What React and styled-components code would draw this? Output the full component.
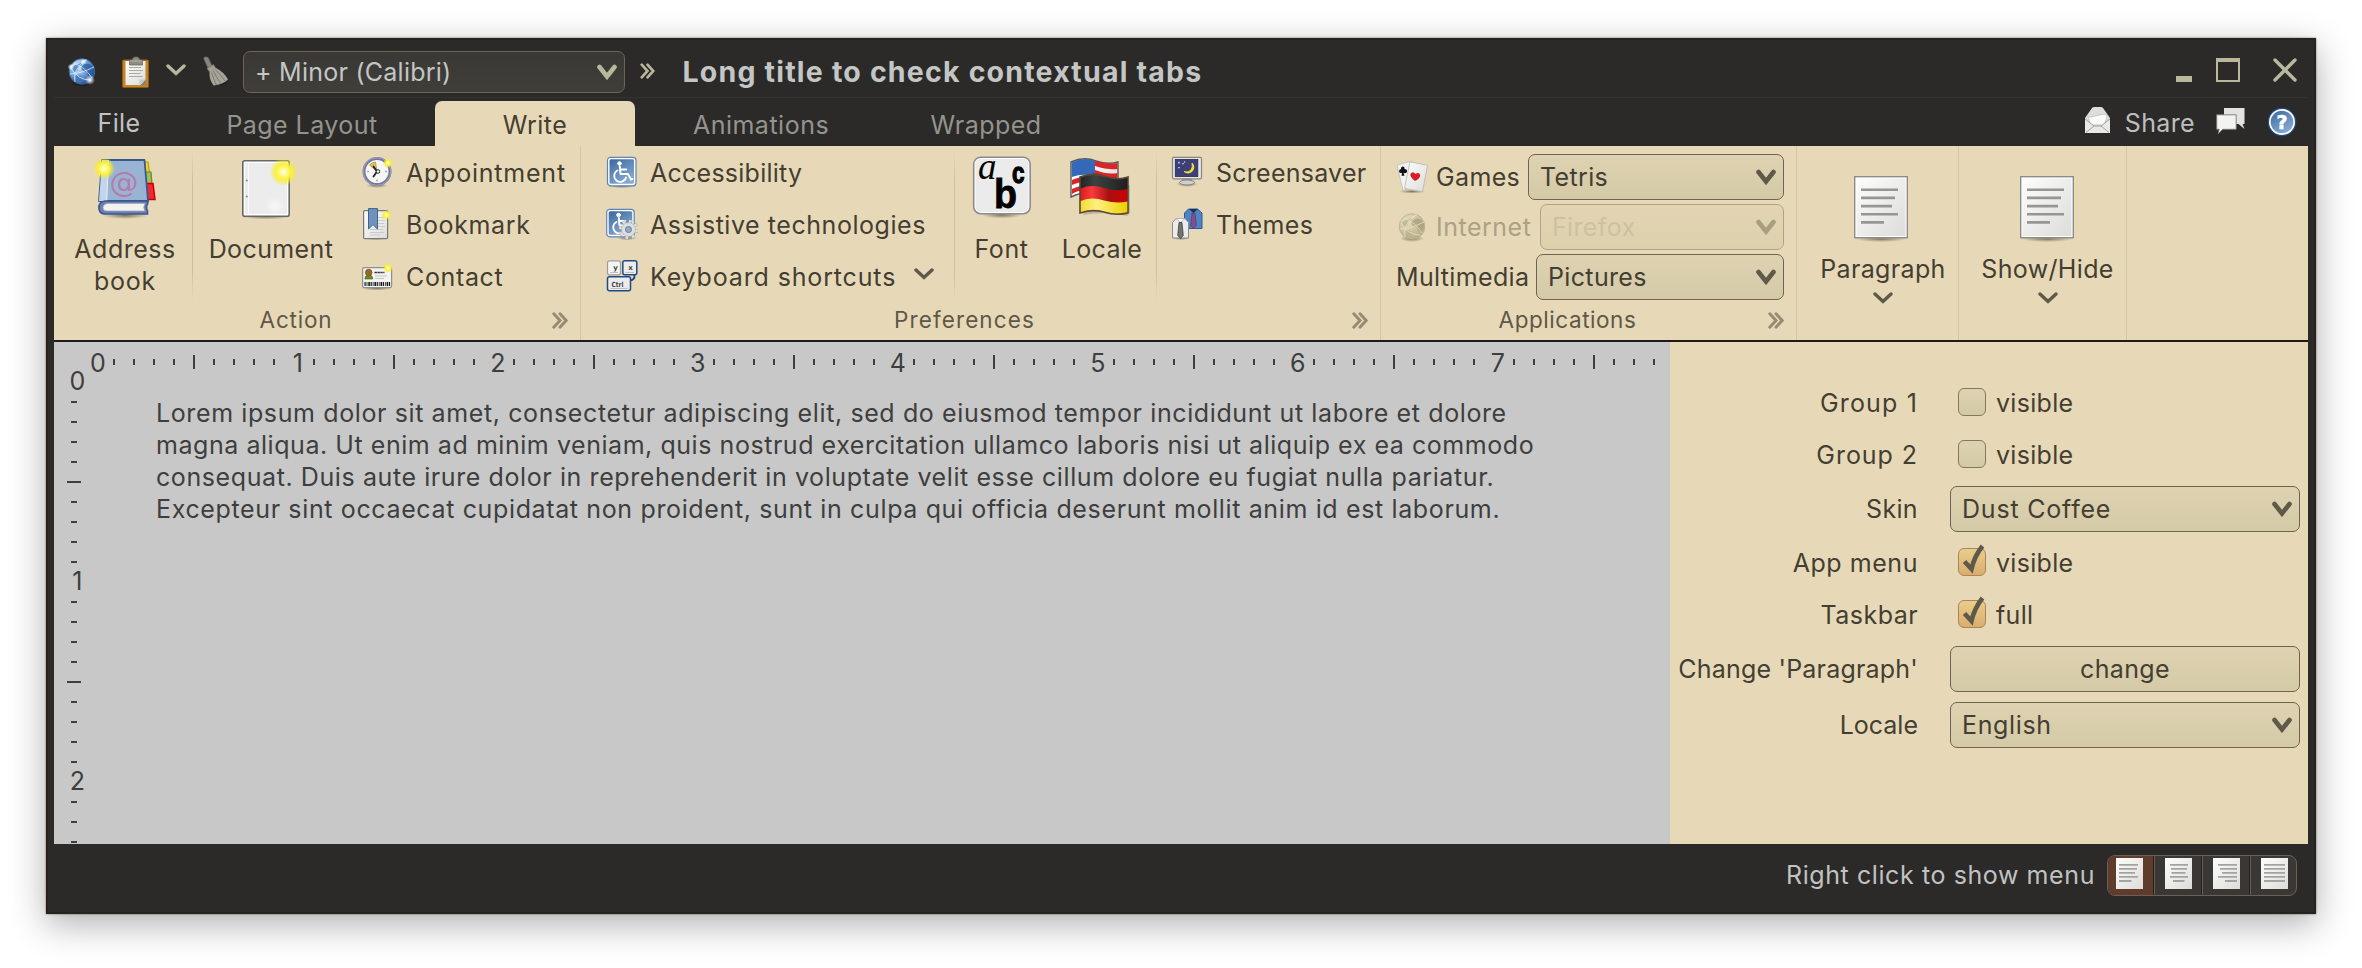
import React from "react";
import styled, { createGlobalStyle, css } from "styled-components";

const GlobalStyle = createGlobalStyle`
  * { box-sizing: border-box; }
  body { margin: 0; background: #fff; }
  #root { font-family: Inter, "Liberation Sans", sans-serif; font-size: 25px; color: #443e32; }
`;

const Desktop = styled.div`
  width: 2362px;
  height: 968px;
  padding: 38px 46px 0;
  overflow: hidden;
  background: #fff;
`;

const Window = styled.div`
  width: 2270px;
  height: 876px;
  padding: 0 8px;
  display: flex;
  flex-direction: column;
  background: #2b2a28;
  box-shadow: inset 0 0 0 2px #28221d, 0 0 2px rgba(0, 0, 0, 0.5), 0 10px 34px rgba(0, 0, 0, 0.32);
`;

const Text = styled.span`
  display: block;
  white-space: pre;
  line-height: 32px;
  font-size: ${(p) => p.$size || 25}px;
  letter-spacing: ${(p) => p.$ls ?? 0.35}px;
`;

/* ---------- title bar ---------- */

const TitleBar = styled.header`
  height: 60px;
  padding: 8px 11px 0 12px;
  display: flex;
  align-items: center;
  border-bottom: 1px solid #333230;
`;

const Slot = styled.div`
  display: flex;
  flex: none;
  margin-left: ${(p) => p.$ml || 0}px;
  margin-top: ${(p) => p.$mt || 0}px;
  margin-right: ${(p) => p.$mr || 0}px;
`;

const WindowTitle = styled.h1`
  margin: 0 auto 0 27.5px;
  font-size: 28.5px;
  font-weight: 700;
  letter-spacing: 1.2px;
  line-height: 36px;
  color: #c3c6c5;
  white-space: pre;
`;

const comboTones = {
  dark: css`
    background: linear-gradient(#393834, #3f3e39);
    border-color: #6d6357;
    color: #c3c6c5;
  `,
  light: css`
    background: linear-gradient(#ded2b2, #d5caa6);
    border-color: #6d6551;
    color: #443e32;
  `,
};

const ComboBox = styled.div`
  width: ${(p) => p.$w}px;
  height: ${(p) => p.$h || 46}px;
  flex: none;
  display: flex;
  align-items: center;
  justify-content: space-between;
  padding: 0 7px 0 ${(p) => p.$pl || 11}px;
  border: 1.5px solid;
  border-radius: 7px;
  ${(p) => comboTones[p.$tone || "light"]}
  ${(p) => p.$disabled && css`
    background: linear-gradient(#e3d5b3, #ddd0ac);
    border-color: #b0a487;
    color: #cdc19f;
  `}
`;

/* ---------- tabs ---------- */

const TabRow = styled.nav`
  height: 48px;
  display: flex;
  padding-right: 11px;
`;

const Tab = styled.div`
  width: ${(p) => p.$w}px;
  margin-left: ${(p) => p.$ml || 0}px;
  margin-top: 3px;
  height: 45px;
  padding-top: ${(p) => p.$pt ?? 8}px;
  display: flex;
  justify-content: center;
  color: ${(p) => p.$color || "#94948f"};
  border-radius: 7px 7px 0 0;
  ${(p) => p.$active && css`
    background: #e7d9b7;
    color: #443e32;
  `}
`;

const TabTools = styled.div`
  margin-left: auto;
  display: flex;
  color: #bcbfbe;
`;

/* ---------- ribbon ---------- */

const Ribbon = styled.section`
  height: 196px;
  display: flex;
  background: #e7d9b7;
  border-bottom: 2px solid #1d1a18;
`;

const Group = styled.div`
  width: ${(p) => p.$w}px;
  height: 194px;
  flex: none;
  display: flex;
  flex-direction: column;
  border-right: 1px solid #d3c8a4;
`;

const GroupBody = styled.div`
  height: 156px;
  display: flex;
`;

const Caption = styled.div`
  height: 36px;
  padding-right: 12px;
  display: flex;
  align-items: center;
  color: #5f5748;
`;

const CaptionLabel = styled.div`
  flex: 1;
  display: flex;
  justify-content: center;
  margin-right: ${(p) => p.$gap}px;
`;

const Divider = styled.div`
  width: 1px;
  height: 150px;
  margin-top: 5px;
  background: linear-gradient(rgba(200, 188, 150, 0), #cdc19d 20%, #cdc19d 80%, rgba(200, 188, 150, 0));
`;

const BigButton = styled.div`
  width: ${(p) => p.$w}px;
  padding: ${(p) => p.$pt || 9}px 0 0 ${(p) => p.$pl || 0}px;
  flex: none;
  display: flex;
  flex-direction: column;
  align-items: center;
  text-align: center;
  & > svg {
    margin-bottom: ${(p) => p.$gap || 14}px;
    margin-right: ${(p) => p.$mr || 0}px;
    flex: none;
  }
`;

const ArrowBelow = styled.div`
  margin-top: 7px;
  display: flex;
`;

const SmallColumn = styled.div`
  width: ${(p) => p.$w}px;
  padding-left: ${(p) => p.$pl}px;
`;

const SmallButton = styled.div`
  height: 52px;
  display: flex;
  align-items: center;
  gap: ${(p) => p.$gap || 12}px;
  & > span { margin-top: 2px; }
`;

const ComboColumn = styled.div`
  width: 415px;
  padding: 6px 12px 0 15px;
`;

const ComboRow = styled.div`
  height: 50px;
  display: flex;
  align-items: center;
  & > :last-child { margin-left: auto; }
`;

const ComboLabel = styled.div`
  display: flex;
  align-items: center;
  gap: 8px;
  color: ${(p) => (p.$disabled ? "#ada184" : "inherit")};
`;

/* ---------- content ---------- */

const Content = styled.main`
  height: 502px;
  display: flex;
`;

const Page = styled.div`
  width: 1616px;
  height: 502px;
  overflow: hidden;
  background: #c8c8c8;
  color: #3e3e3e;
`;

const RulerTop = styled.div`
  height: 30px;
  width: 1616px;
  padding: 0 0 0 30px;
  display: flex;
`;

const CellX = styled.div`
  width: 20px;
  height: 40px;
  flex: none;
  display: flex;
  justify-content: center;
  align-items: center;
  & > span { margin: 2px 0 0 8px; }
`;

const TickX = styled.div`
  width: 2px;
  height: ${(p) => (p.$long ? 14 : 6)}px;
  background: #3e3e3e;
`;

const PageBody = styled.div`
  display: flex;
`;

const RulerLeft = styled.div`
  width: 30px;
  height: 472px;
  padding-left: 10px;
  flex: none;
`;

const CellY = styled.div`
  width: 20px;
  height: 20px;
  display: flex;
  justify-content: center;
  align-items: center;
  & > span { margin: -2px 0 0 7px; }
`;

const TickY = styled.div`
  width: ${(p) => (p.$long ? 14 : 6)}px;
  height: 2px;
  background: #3e3e3e;
`;

const Paragraph = styled.p`
  margin: 25px 0 0 72px;
  line-height: 32px;
`;

const Form = styled.aside`
  width: 638px;
  height: 502px;
  padding: 34px 8px 0 0;
  background: #e7d9b7;
`;

const FormRow = styled.div`
  height: ${(p) => p.$h}px;
  display: flex;
  align-items: center;
`;

const FormLabel = styled.div`
  width: 248px;
  margin-right: 32px;
  flex: none;
  display: flex;
  justify-content: flex-end;
  margin-top: ${(p) => p.$mt || 0}px;
`;

const CheckLine = styled.div`
  display: flex;
  align-items: center;
  gap: 10px;
  padding-left: 8px;
  & > span { margin-top: 1px; }
`;

const Box = styled.div`
  width: 28px;
  height: 28px;
  border-radius: 6px;
  border: 1.5px solid #81785f;
  background: linear-gradient(#ded2b2, #d4c9a5);
  ${(p) => p.$on && css`
    border-color: #b08257;
    background: linear-gradient(#eacd8d, #d9ae6e);
  `}
  & > svg { display: block; overflow: visible; }
`;

const PushButton = styled.div`
  width: 350px;
  height: 46px;
  display: flex;
  align-items: center;
  justify-content: center;
  border: 1.5px solid #6d6551;
  border-radius: 7px;
  background: linear-gradient(#ded2b2, #d5caa6);
`;

/* ---------- status bar ---------- */

const StatusBar = styled.footer`
  height: 70px;
  padding: 11px 11px 0 0;
  display: flex;
  justify-content: flex-end;
  color: #c0c3c2;
`;

const ToggleGroup = styled.div`
  width: 190px;
  height: 41px;
  margin-left: 12px;
  display: flex;
  border: 1px solid #6a6055;
  border-radius: 8px;
  overflow: hidden;
  background: #393835;
`;

const Toggle = styled.div`
  width: 48px;
  flex: none;
  padding: 2px 0 0 10px;
  background: transparent;
  ${(p) => p.$on && css`
    width: 46px;
    padding-left: 8px;
    background: #5f3c2b;
  `}
  & + & { border-left: 1px solid #655b50; box-shadow: -1px 0 0 #24211f; }
`;

/* ---------- icons ---------- */

const Chevron = ({ w = 20, h = 12, color = "#5f594a", sw = 3.4 }) => (
  <svg width={w} height={h} viewBox={`0 0 ${w} ${h}`}>
    <path d={`M2 2 L${w / 2} ${h - 2.5} L${w - 2} 2`} fill="none" stroke={color} strokeWidth={sw} strokeLinecap="round" />
  </svg>
);

const ComboArrow = ({ color = "#5f594a" }) => (
  <svg width="20" height="16" viewBox="0 0 20 16">
    <path d="M2.5 3 L10 12.5 L17.5 3" fill="none" stroke={color} strokeWidth="4.6" strokeLinecap="round" />
  </svg>
);

const DoubleChevron = ({ w = 16, h = 17, color = "#958c74", sw = 3 }) => (
  <svg width={w} height={h} viewBox="0 0 16 17">
    <path d="M1.8 1.8 L8 8.5 L1.8 15.2 M8 1.8 L14.2 8.5 L8 15.2" fill="none" stroke={color} strokeWidth={sw} strokeLinecap="round" />
  </svg>
);

const Defs = () => (
  <svg width="0" height="0" style={{ display: "block" }}>
    <defs>
      <radialGradient id="glow">
        <stop offset="0" stopColor="#fffff0" />
        <stop offset="0.25" stopColor="#fffa90" />
        <stop offset="0.55" stopColor="#fcf230" stopOpacity="0.95" />
        <stop offset="1" stopColor="#f8ec20" stopOpacity="0" />
      </radialGradient>
      <linearGradient id="paper" x1="0" y1="0" x2="1" y2="1">
        <stop offset="0" stopColor="#fdfdfc" />
        <stop offset="1" stopColor="#dcdcd9" />
      </linearGradient>
      <linearGradient id="blue" x1="0" y1="0" x2="0.6" y2="1">
        <stop offset="0" stopColor="#3c689f" />
        <stop offset="1" stopColor="#86a9d2" />
      </linearGradient>
      <radialGradient id="earth" cx="0.35" cy="0.3" r="0.75">
        <stop offset="0" stopColor="#e4f0fb" />
        <stop offset="0.45" stopColor="#7fadde" />
        <stop offset="1" stopColor="#1f4a90" />
      </radialGradient>
      <radialGradient id="earthOff" cx="0.35" cy="0.3" r="0.8">
        <stop offset="0" stopColor="#e6dfc2" />
        <stop offset="1" stopColor="#b3a882" />
      </radialGradient>
      <radialGradient id="shade">
        <stop offset="0" stopColor="#000" stopOpacity="0.45" />
        <stop offset="1" stopColor="#000" stopOpacity="0" />
      </radialGradient>
      <radialGradient id="spark">
        <stop offset="0" stopColor="#fff" />
        <stop offset="1" stopColor="#fff" stopOpacity="0" />
      </radialGradient>
      <linearGradient id="flagUs"><stop offset="0" stopColor="#fff" /><stop offset="1" stopColor="#e4e4e4" /></linearGradient>
      <linearGradient id="deRed"><stop offset="0" stopColor="#e01818" /><stop offset="0.25" stopColor="#f83c3c" /><stop offset="0.6" stopColor="#a81010" /><stop offset="1" stopColor="#d00000" /></linearGradient>
      <linearGradient id="deGold"><stop offset="0" stopColor="#f5dc30" /><stop offset="0.35" stopColor="#fdf080" /><stop offset="1" stopColor="#ecd000" /></linearGradient>
      <linearGradient id="deBlack"><stop offset="0" stopColor="#222624" /><stop offset="0.3" stopColor="#3c4240" /><stop offset="1" stopColor="#1c201e" /></linearGradient>
    </defs>
  </svg>
);

const Globe = ({ off }) => (
  <svg width="32" height="32" viewBox="0 0 32 32">
    <ellipse cx="16" cy="27.5" rx="12" ry="3.5" fill="url(#shade)" />
    <circle cx="16" cy="15.5" r="12.8" fill={off ? "url(#earthOff)" : "url(#earth)"} stroke={off ? "#b9ae8c" : "#3a66a6"} strokeWidth="0.8" />
    <path d="M17 9 q4 -3 8 0 l3 4 q0 5 -3 8 l-3 -1 -1 -4 -4 -1 -2 -3 z" fill={off ? "#a99e79" : "#24569c"} opacity="0.75" />
    <path d="M6 12 l4 -4 5 -2 1 3 -3 2 -2 4 -3 1 z M10 19 l5 1 2 4 -3 4 -4 -3 z" fill={off ? "#bdb28e" : "#3f76b8"} opacity="0.75" />
    <path d="M4.5 10 Q15 7 21 4 M5 12 Q12 24 24 24 M20 3.5 Q6 14 9 26 M8 7 Q20 12 26 22 M4 18 Q14 18 28 11" fill="none" stroke={off ? "#e9e2c8" : "#e3f0ff"} strokeWidth="1" opacity="0.75" />
    {!off && <circle cx="24" cy="24" r="5" fill="url(#spark)" />}
    {!off && <circle cx="5" cy="11" r="3.5" fill="url(#spark)" />}
    {!off && <circle cx="17.5" cy="5.5" r="3" fill="url(#spark)" />}
  </svg>
);

const Clipboard = () => (
  <svg width="32" height="34" viewBox="0 0 32 34">
    <rect x="3.5" y="5" width="26" height="27.5" rx="1.2" fill="#c58425" stroke="#90590f" />
    <path d="M6.5 6 h20 v19 l-4.5 5 h-15.5 z" fill="url(#paper)" />
    <path d="M26.5 24.5 L21 30.5 h5.5 z" fill="#82827e" />
    <path d="M20.5 24.5 h6 l-6 6 z" fill="#c9c9c5" />
    <path d="M10 12.5 h12 M10 15.5 h14 M10 18.5 h11.5 M10 21.5 h13.5" stroke="#a9a9a6" strokeWidth="1" />
    <path d="M10.5 5 h3 q0 -3 3 -3 h1 q3 0 3 3 h3 v5 h-13 z" fill="#8d8d82" stroke="#6a6a60" strokeWidth="0.8" />
    <path d="M11 6 h12" stroke="#b5b5aa" strokeWidth="1" />
  </svg>
);

const Broom = () => (
  <svg width="32" height="32" viewBox="0 0 32 32">
    <ellipse cx="19" cy="28" rx="11" ry="3" fill="url(#shade)" />
    <path d="M3.5 3 q2.500 -2.500 5 0 l4 9 -4 2.500 z" fill="#87867c" stroke="#605f56" strokeWidth="0.7" />
    <path d="M7 13.5 l6.500 -4 2.500 4 -6 4 z" fill="#a09f92" stroke="#6b6a60" strokeWidth="0.6" />
    <path d="M9.5 17 l6.500 -4 q8 4 12 11.500 q-5 5 -14.500 6 q-4.500 -6 -4 -13.500 z" fill="#a5a496" />
    <path d="M11.5 17.500 q2 7 5 12.500 M13.5 16 q3 7 7.500 12.500 M15.5 15 q5 4 9.500 11" stroke="#77766b" strokeWidth="0.9" fill="none" />
  </svg>
);

const AddressBook = () => (
  <svg width="64" height="64" viewBox="0 0 64 64">
    <ellipse cx="32" cy="60.5" rx="23" ry="3.5" fill="url(#shade)" />
    <path d="M51 7 h4 l1.5 11 h-4.5 z" fill="#f2d72c" stroke="#b79f00" strokeWidth="1.2" />
    <path d="M52 17 h6 l1 12 h-6 z" fill="#a2bd52" stroke="#6d8a1c" strokeWidth="1.2" />
    <path d="M53 28.5 h7 l2 16 h-8 z" fill="#f2282c" stroke="#c80008" strokeWidth="1.5" />
    <path d="M9 5 h42.5 l3.5 41 h-49 z" fill="#99b3d4" stroke="#3a5791" strokeWidth="1.8" strokeLinejoin="round" />
    <path d="M9 5 h7 l-2 41 h-8 z" fill="#c3d5ea" />
    <path d="M15.5 6 l-1.8 40" stroke="#e2ecf6" strokeWidth="1" />
    <path d="M55 46 h-43 q-7 1 -6 8 q1 5 6 5 h42.5 v-3 q-2 -4 0 -7 z" fill="#6d80ae" stroke="#3a5791" strokeWidth="1.6" />
    <path d="M52 48.5 h-38 q-4 1 -4 4 q0 3.5 4 3.5 h38 q-2.5 -3.5 0 -7.5 z" fill="#f2f2f0" stroke="#a3a7b5" strokeWidth="0.7" />
    <text x="31" y="37" textAnchor="middle" fontFamily="DejaVu Sans, sans-serif" fontSize="29" fill="#b57ba9">@</text>
    <circle cx="11" cy="13.5" r="11" fill="url(#glow)" />
  </svg>
);

const DocumentIcon = () => (
  <svg width="64" height="64" viewBox="0 0 64 64">
    <ellipse cx="27" cy="61.5" rx="25" ry="3" fill="url(#shade)" />
    <rect x="3.8" y="5.8" width="46.4" height="55.5" rx="2" fill="#fff" stroke="#66676a" strokeWidth="1.6" />
    <rect x="6" y="8" width="42" height="51" fill="#ececec" />
    <path d="M9.5 8 v51" stroke="#fafafa" strokeWidth="1" />
    <circle cx="7.8" cy="25.5" r="1.1" fill="#8a8a8a" />
    <circle cx="7.8" cy="41.5" r="1.1" fill="#8a8a8a" />
    <circle cx="36" cy="51" r="10" fill="url(#spark)" opacity="0.6" />
    <circle cx="44.5" cy="17" r="14" fill="url(#glow)" />
  </svg>
);

const Clock = () => (
  <svg width="32" height="32" viewBox="0 0 32 32">
    <ellipse cx="16" cy="29.5" rx="11" ry="2.5" fill="url(#shade)" />
    <circle cx="16" cy="15.5" r="13" fill="#f6f6f4" stroke="#77779c" strokeWidth="3" />
    <circle cx="16" cy="15.5" r="13.8" fill="none" stroke="#a9a9c6" strokeWidth="0.8" />
    <path d="M16 15.5 L8.5 9 Q11 6.5 14.5 6 z" fill="#dec25e" stroke="#a58a2c" strokeWidth="0.7" />
    <path d="M16 15.5 L12.5 10.5 M16 15.5 L12.5 20.5" stroke="#222" strokeWidth="1.8" strokeLinecap="round" />
    <circle cx="17" cy="15.5" r="1.8" fill="#fff" stroke="#222" strokeWidth="1" />
    <path d="M6 15.5 h2 M24 15.5 h2 M16 23.5 v2" stroke="#aaa" strokeWidth="1.5" />
    <circle cx="27" cy="7" r="5" fill="url(#glow)" />
  </svg>
);

const BookmarkIcon = () => (
  <svg width="32" height="32" viewBox="0 0 32 32">
    <ellipse cx="15" cy="30.5" rx="12" ry="1.5" fill="url(#shade)" />
    <rect x="2.6" y="2.6" width="24" height="28" rx="1.2" fill="url(#paper)" stroke="#77787a" strokeWidth="1.2" />
    <path d="M17 9.5 h6 M17 12.5 h7 M17 15.5 h6 M17 18.5 h7 M9 21.5 h13 M9 24.5 h14 M9 27 h10" stroke="#cbcbcb" strokeWidth="1" />
    <path d="M7.5 0.6 h9 v20.5 l-4.5 -4.5 -4.5 4.5 z" fill="#6f93bd" stroke="#3f618e" strokeWidth="1" />
    <circle cx="25.5" cy="7" r="5" fill="url(#glow)" />
  </svg>
);

const ContactIcon = () => (
  <svg width="32" height="32" viewBox="0 0 32 32">
    <ellipse cx="16" cy="28.5" rx="15" ry="2" fill="url(#shade)" />
    <rect x="1.6" y="7.6" width="29" height="20" rx="1.5" fill="#f3f3f1" stroke="#8e8e8e" strokeWidth="1.2" />
    <circle cx="7.7" cy="12.5" r="3.3" fill="#a5631e" stroke="#6f4110" strokeWidth="0.6" />
    <path d="M3.8 19 q0 -4 4 -4 q4 0 4 4 z" fill="#6d8c22" stroke="#486010" strokeWidth="0.6" />
    <path d="M13.5 12.5 h10" stroke="#333" strokeWidth="1.6" strokeDasharray="2.4 0.5" />
    <path d="M14 16 h12 M14 18.5 h9" stroke="#c6c6c4" strokeWidth="1.2" />
    <path d="M3.5 24 h26" stroke="#1a1a1a" strokeWidth="4" strokeDasharray="1.2 0.9 0.8 0.9 1.6 0.7" />
    <circle cx="27" cy="8" r="5" fill="url(#glow)" />
  </svg>
);

const WheelchairArt = () => (
  <g fill="none" stroke="#fff" strokeWidth="2" strokeLinecap="round" strokeLinejoin="round">
    <circle cx="13.5" cy="7.5" r="1.8" fill="#fff" strokeWidth="1" />
    <path d="M13.8 10.5 l0.7 7.5 h7.5 l3 5.5 l1.5 -0.5 M14.2 13.5 h6" />
    <path d="M11.5 14.5 a6 6 0 1 0 8.5 7" strokeWidth="1.8" />
  </g>
);

const AccessIcon = () => (
  <svg width="32" height="32" viewBox="0 0 32 32">
    <ellipse cx="16" cy="30.3" rx="14" ry="1.8" fill="url(#shade)" />
    <rect x="1.5" y="1.3" width="28.5" height="28.5" rx="3" fill="#fff" stroke="#5d84b5" strokeWidth="1.2" />
    <rect x="3.5" y="3.3" width="24.5" height="24.5" rx="1.5" fill="url(#blue)" />
    <WheelchairArt />
  </svg>
);

const AssistIcon = () => (
  <svg width="32" height="32" viewBox="0 0 32 32">
    <ellipse cx="21" cy="30.3" rx="10" ry="1.8" fill="url(#shade)" />
    <rect x="0.7" y="1.3" width="27.5" height="27.5" rx="3" fill="#fff" stroke="#5d84b5" strokeWidth="1.2" />
    <rect x="2.7" y="3.3" width="23.5" height="23.5" rx="1.5" fill="url(#blue)" />
    <g transform="translate(-1 -0.5)"><WheelchairArt /></g>
    <circle cx="22.5" cy="21.5" r="8" fill="none" stroke="#9b9b9b" strokeWidth="3.8" strokeDasharray="3.14 3.14" />
    <circle cx="22.5" cy="21.5" r="8" fill="none" stroke="#e2e2e2" strokeWidth="3" strokeDasharray="2.6 3.68" strokeDashoffset="-0.27" />
    <circle cx="22.5" cy="21.5" r="7" fill="#dededd" stroke="#a2a2a2" strokeWidth="0.5" />
    <circle cx="22.5" cy="21.5" r="3" fill="#8fabc9" stroke="#62809e" strokeWidth="1" />
  </svg>
);

const KeysIcon = () => (
  <svg width="32" height="32" viewBox="0 0 32 32">
    <rect x="1.5" y="0.8" width="13" height="14" rx="2" fill="#f4f4f2" stroke="#9c9c98" strokeWidth="1.2" />
    <rect x="16.8" y="0.8" width="14" height="14" rx="2" fill="#ececea" stroke="#204a87" strokeWidth="1.5" />
    <path d="M28.5 15 q0.5 5 -4.5 5.5" fill="none" stroke="#204a87" strokeWidth="1.8" />
    <rect x="1.5" y="16.8" width="23" height="14" rx="2" fill="#ececea" stroke="#204a87" strokeWidth="1.5" />
    <path d="M4 12.5 h8 M19.5 12.5 h8.5 M4.5 28.5 h17" stroke="#bfbfba" strokeWidth="1" />
    <g fontFamily="DejaVu Sans, sans-serif" fontSize="7" fontWeight="bold" fill="#444" textAnchor="middle">
      <text x="9.5" y="10">y</text>
      <text x="24.5" y="10">x</text>
      <text x="11.5" y="26.5" textLength="12" lengthAdjust="spacingAndGlyphs">Ctrl</text>
    </g>
  </svg>
);

const FontIcon = () => (
  <svg width="64" height="64" viewBox="0 0 64 64">
    <ellipse cx="32" cy="60" rx="20" ry="3.5" fill="url(#shade)" />
    <rect x="3.7" y="2.2" width="56.5" height="56.5" rx="7" fill="#fff" stroke="#8c8c8c" strokeWidth="1.6" />
    <rect x="5.5" y="4" width="53" height="53" rx="5" fill="#ebebeb" />
    <text x="8" y="23.5" fontFamily="Liberation Serif, serif" fontStyle="italic" fontSize="37" fill="#000">a</text>
    <text x="24" y="53" fontFamily="Liberation Sans, sans-serif" fontWeight="bold" fontSize="40" fill="#000" stroke="#000" strokeWidth="0.8" textLength="23" lengthAdjust="spacingAndGlyphs">b</text>
    <text x="42" y="27.5" fontFamily="Liberation Sans, sans-serif" fontWeight="bold" fontSize="30" fill="#000" stroke="#000" strokeWidth="1.3" textLength="12.5" lengthAdjust="spacingAndGlyphs">c</text>
  </svg>
);

const FlagsIcon = () => (
  <svg width="64" height="64" viewBox="0 0 64 64">
    <path d="M5 7 Q18 1 30 6 Q42 10 52 7 V40 Q40 43 30 38 Q17 36 5 42 z" fill="url(#flagUs)" stroke="#5a5a55" strokeWidth="1.4" />
    <path d="M29 6 Q42 10 51.5 8 v6 Q42 15 29 11 z M29 15 Q42 20 51.5 18 v5 Q42 24 29 20 z M6 25 Q12 22 20 22 v5 Q12 27 6 30 z M6 34 Q12 31 20 30 v5 Q12 35 6 39 z" fill="#dc2328" />
    <path d="M5.7 7.5 Q18 1.5 29 6 V21 Q17 18 5.7 22 z" fill="#3468b8" />
    <path d="M17 60 Q40 56 61 61 l3 -3 V30 l-40 5 z" fill="#000" opacity="0.17" />
    <path d="M14 22 Q26 17 38 21 Q51 26 62 22 V58 Q50 61 38 57 Q26 54 14 58 z" fill="url(#deRed)" stroke="#4c4c3a" strokeWidth="1.6" />
    <path d="M14.8 22.5 Q26 17.8 38 21.8 Q51 26.6 61.3 23 V34 Q51 37 38 33 Q26 29 14.8 33.5 z" fill="url(#deBlack)" />
    <path d="M14.8 46 Q26 41.5 38 45.5 Q51 49 61.3 46.5 V57.3 Q50 60 38 56.2 Q26 53 14.8 57 z" fill="url(#deGold)" />
  </svg>
);

const ScreenIcon = () => (
  <svg width="32" height="32" viewBox="0 0 32 32">
    <ellipse cx="16" cy="28" rx="11" ry="3" fill="url(#shade)" />
    <rect x="11" y="22" width="10" height="4" fill="#9c9c9a" />
    <ellipse cx="16" cy="26.5" rx="7.5" ry="2.5" fill="#cfcfcd" stroke="#7f7f7c" strokeWidth="0.9" />
    <rect x="1.5" y="1.3" width="29" height="21.5" rx="1.2" fill="#e7e7e5" stroke="#858582" strokeWidth="1.2" />
    <rect x="4.3" y="3.5" width="22.5" height="17" fill="#3d3f78" stroke="#26284f" strokeWidth="0.8" />
    <path d="M21 7 a5.8 5.8 0 1 1 -8 8.500 q4.500 1.500 7 -1.500 q2 -3 1 -7 z" fill="#fbe62c" stroke="#fbe62c" strokeWidth="0.8" />
    <path d="M8 5.8 v1.6 M12 7 v1.2 M8 11 v1.2 M13.5 5.5 v1" stroke="#fff" strokeWidth="1.2" />
  </svg>
);

const ShirtsIcon = () => (
  <svg width="32" height="32" viewBox="0 0 32 32">
    <path d="M13.5 5 l4 -4 h9 l4.5 4 v15.5 h-17.5 z" fill="#5083c4" stroke="#2e5a95" strokeWidth="1" />
    <path d="M18 1 l4.5 4 4.5 -4 z" fill="#18345e" />
    <path d="M21 5 h3 l1.3 12.5 -2.8 3 -2.8 -3 z" fill="#814f8c" stroke="#582f66" strokeWidth="0.6" />
    <ellipse cx="10" cy="30.5" rx="9" ry="1.5" fill="url(#shade)" />
    <path d="M1.5 14.5 l3.5 -4 h9 l3.5 4 v15.5 h-16 z" fill="#ececec" stroke="#8c8c8c" strokeWidth="1" />
    <path d="M5 10.5 l4.5 4 4.5 -4 z" fill="#fff" stroke="#aaa" strokeWidth="0.7" />
    <path d="M8 14.5 h3 l1.3 13 -2.8 3 -2.8 -3 z" fill="#70746f" stroke="#333" strokeWidth="0.7" />
  </svg>
);

const CardsIcon = () => (
  <svg width="32" height="34" viewBox="0 0 32 34">
    <ellipse cx="16" cy="31.5" rx="13" ry="2" fill="url(#shade)" />
    <path d="M1 5 l15 -4 6 24 -15 5.5 z" fill="#f2f2f0" stroke="#bdbdb8" strokeWidth="0.8" />
    <path d="M14 1.8 l17.5 3.5 -5 26.5 -18 -3.5 z" fill="url(#paper)" stroke="#b5b5b0" strokeWidth="0.8" />
    <path d="M6.5 6.5 q2.5 0 2 2.5 q3 0 2.5 3 q-1.5 2 -3.5 0.8 l1 3 h-3 l0.5 -2.8 q-2.5 0.5 -3 -1.5 q0 -2.5 2 -2.5 q-0.5 -2 1.5 -2.5 z" fill="#111" />
    <path d="M19 21 q-5.5 -4.5 -4.5 -7 q2 -3.5 5 0 q3.5 -2.5 4.7 1 q0 3.5 -5.2 6 z" fill="#dc1c22" />
  </svg>
);

const ParagraphIcon = () => (
  <svg width="56" height="66" viewBox="0 0 56 66">
    <ellipse cx="28" cy="63" rx="26" ry="3" fill="url(#shade)" />
    <rect x="1.7" y="0.7" width="52.6" height="61" fill="#fff" stroke="#8c8c8a" strokeWidth="1.4" />
    <rect x="3.5" y="2.5" width="49" height="57.5" fill="url(#paper)" />
    <path d="M8 13.7 h37 M8 21.9 h34 M8 30.1 h31 M8 38.2 h37 M8 46.4 h23" stroke="#969694" strokeWidth="2.6" />
  </svg>
);

const alignLines = {
  left: [[3, 19], [3, 18], [3, 16], [3, 19], [3, 12.5]],
  center: [[5, 18], [6, 16], [6.5, 14], [5, 18], [8, 11.5]],
  right: [[5, 19], [7, 17], [9, 15], [5, 19], [12, 12]],
  justify: [[3, 21], [3, 21], [3, 21], [3, 21], [3, 21]],
};

const AlignIcon = ({ kind }) => (
  <svg width="27" height="31" viewBox="0 0 27 31">
    <rect width="27" height="31" fill="url(#paper)" />
    {alignLines[kind].map(([x, w], i) => (
      <path key={i} d={`M${x} ${6.8 + i * 4.05} h${w}`} stroke="#a3a3a1" strokeWidth="1.8" />
    ))}
  </svg>
);

const Envelope = () => (
  <svg width="27" height="28" viewBox="0 0 27 28">
    <path d="M1 12 L8 2 q1 -1 2 -1 h7 q1 0 2 1 l7 10 v15 h-25 z" fill="#dddddb" />
    <path d="M4 11.5 l16 -3.5 q3 0 3 3 l-3 8 h-13 z" fill="#fafafa" stroke="#b9b9b7" strokeWidth="0.7" />
    <path d="M1 13 l9 7 h7 l9 -7 v14 h-25 z" fill="#e9e9e8" />
    <path d="M1 13 l9 7 h7 l9 -7 M10 20 l-8 6.5 M17 20 l8 6.5" fill="none" stroke="#9a9a98" strokeWidth="0.9" />
  </svg>
);

const Bubbles = () => (
  <svg width="30" height="28" viewBox="0 0 30 28">
    <path d="M8 1 h20.5 v16 h-2 l2 5 -6 -5 h-14.5 z" fill="#e3e3e2" />
    <path d="M0.7 7.8 h19.5 v14.5 h-13.5 l-4.5 4.5 1 -4.5 h-2.5 z" fill="#f3f3f2" stroke="#777776" strokeWidth="0.9" />
  </svg>
);

const HelpIcon = () => (
  <svg width="30" height="30" viewBox="0 0 30 30">
    <circle cx="15" cy="15" r="14.3" fill="#204a87" />
    <circle cx="15" cy="15" r="13" fill="#fff" />
    <circle cx="15" cy="15" r="11.3" fill="url(#blue)" />
    <text x="15" y="22" textAnchor="middle" fontFamily="DejaVu Sans, sans-serif" fontWeight="bold" fontSize="19" fill="#fff" stroke="#fff" strokeWidth="0.6">?</text>
  </svg>
);

const Minimize = () => (
  <svg width="16" height="24" viewBox="0 0 16 24"><rect y="18" width="16" height="6" fill="#b9b89c" /></svg>
);
const Maximize = () => (
  <svg width="24" height="24" viewBox="0 0 24 24">
    <path d="M1 1 v22 h22 v-22" fill="none" stroke="#b9b89c" strokeWidth="2" />
    <rect width="24" height="4" fill="#b9b89c" />
  </svg>
);
const Close = () => (
  <svg width="24" height="24" viewBox="0 0 24 24">
    <path d="M2 2 L22 22 M22 2 L2 22" stroke="#b9b89c" strokeWidth="3.4" strokeLinecap="round" />
  </svg>
);

const CheckMark = () => (
  <svg width="25" height="25" viewBox="0 0 25 25">
    <path d="M5.5 12.5 L12.5 20 Q15.5 7 23.5 -3" fill="none" stroke="#5f594a" strokeWidth="4.6" />
  </svg>
);

/* ---------- composed parts ---------- */

const Combo = ({ w, h, text, tone, disabled, pl, ls }) => (
  <ComboBox $w={w} $h={h} $tone={tone} $disabled={disabled} $pl={pl}>
    <Text $ls={ls}>{text}</Text>
    <ComboArrow color={tone === "dark" ? "#b9b89c" : disabled ? "#a99e80" : undefined} />
  </ComboBox>
);

const GroupCaption = ({ text, gap, ls = 0.6 }) => (
  <Caption>
    <CaptionLabel $gap={gap}><Text $size={22.5} $ls={ls}>{text}</Text></CaptionLabel>
    <DoubleChevron />
  </Caption>
);

const Small = ({ icon, text, gap, ls, children }) => (
  <SmallButton $gap={gap}>
    {icon}
    <Text $ls={ls}>{text}</Text>
    {children}
  </SmallButton>
);

const CheckRow = ({ h, label, text, on, ls }) => (
  <FormRow $h={h}>
    <FormLabel $mt={1}><Text $ls={ls}>{label}</Text></FormLabel>
    <CheckLine>
      <Box $on={on}>{on && <CheckMark />}</Box>
      <Text $ls={0.3}>{text}</Text>
    </CheckLine>
  </FormRow>
);

const paragraphLines = [
  { ls: 0.61, text: "Lorem ipsum dolor sit amet, consectetur adipiscing elit, sed do eiusmod tempor incididunt ut labore et dolore" },
  { ls: 0.55, text: "magna aliqua. Ut enim ad minim veniam, quis nostrud exercitation ullamco laboris nisi ut aliquip ex ea commodo" },
  { ls: 0.59, text: "consequat. Duis aute irure dolor in reprehenderit in voluptate velit esse cillum dolore eu fugiat nulla pariatur." },
  { ls: 0.635, text: "Excepteur sint occaecat cupidatat non proident, sunt in culpa qui officia deserunt mollit anim id est laborum." },
];

export default function App() {
  return (
    <Desktop>
      <GlobalStyle />
      <Window>
        <TitleBar>
          <Slot><Globe /></Slot>
          <Slot $ml={21}><Clipboard /></Slot>
          <Slot $ml={15} $mt={-3}><Chevron color="#b9b89c" /></Slot>
          <Slot $ml={14} $mt={-2}><Broom /></Slot>
          <Slot $ml={11}><Combo w={382} h={42} tone="dark" text="+ Minor (Calibri)" ls={0.25} /></Slot>
          <Slot $ml={15} $mt={-2}><DoubleChevron w={15} h={18} color="#b9b89c" sw={2.8} /></Slot>
          <WindowTitle>Long title to check contextual tabs</WindowTitle>
          <Slot $mt={-4}><Minimize /></Slot>
          <Slot $ml={24} $mt={-4}><Maximize /></Slot>
          <Slot $ml={33} $mt={-3}><Close /></Slot>
        </TitleBar>
        <TabRow>
          <Tab $w={130} $pt={6} $color="#c0c3c2"><Text>File</Text></Tab>
          <Tab $w={236}><Text $ls={0.45}>Page Layout</Text></Tab>
          <Tab $w={200} $ml={15} $active><Text $ls={0.5}>Write</Text></Tab>
          <Tab $w={252}><Text $ls={0.5}>Animations</Text></Tab>
          <Tab $w={198}><Text $ls={0.45}>Wrapped</Text></Tab>
          <TabTools>
            <Slot $mt={8} $mr={14}><Envelope /></Slot>
            <Slot $mt={9}><Text>Share</Text></Slot>
            <Slot $ml={21} $mt={9}><Bubbles /></Slot>
            <Slot $ml={21} $mt={9}><HelpIcon /></Slot>
          </TabTools>
        </TabRow>

        <Ribbon>
          <Group $w={527}>
            <GroupBody>
              <BigButton $w={138} $pl={4}>
                <AddressBook />
                <Text $ls={0.5}>Address</Text>
                <Text $ls={0.7}>book</Text>
              </BigButton>
              <Divider />
              <BigButton $w={156}>
                <DocumentIcon />
                <Text $ls={0.4}>Document</Text>
              </BigButton>
              <SmallColumn $w={230} $pl={12}>
                <Small gap={13} icon={<Clock />} text="Appointment" ls={0.78} />
                <Small gap={13} icon={<BookmarkIcon />} text="Bookmark" ls={0.63} />
                <Small gap={13} icon={<ContactIcon />} text="Contact" ls={0.65} />
              </SmallColumn>
            </GroupBody>
            <GroupCaption text="Action" gap={14} ls={0.8} />
          </Group>

          <Group $w={800}>
            <GroupBody>
              <SmallColumn $w={373} $pl={25}>
                <Small icon={<AccessIcon />} text="Accessibility" ls={0.25} />
                <Small icon={<AssistIcon />} text="Assistive technologies" ls={0.55} />
                <Small icon={<KeysIcon />} text="Keyboard shortcuts" ls={0.85}>
                  <Slot $ml={6} $mt={-4}><Chevron /></Slot>
                </Small>
              </SmallColumn>
              <Divider />
              <BigButton $w={93}>
                <FontIcon />
                <Text $ls={0.6}>Font</Text>
              </BigButton>
              <BigButton $w={108} $mr={8}>
                <FlagsIcon />
                <Text>Locale</Text>
              </BigButton>
              <Divider />
              <SmallColumn $w={223} $pl={14}>
                <Small gap={13} icon={<ScreenIcon />} text="Screensaver" ls={0.25} />
                <Small gap={13} icon={<ShirtsIcon />} text="Themes" />
              </SmallColumn>
            </GroupBody>
            <GroupCaption text="Preferences" gap={4} ls={1.1} />
          </Group>

          <Group $w={416}>
            <GroupBody>
              <ComboColumn>
                <ComboRow>
                  <ComboLabel><CardsIcon /><Text>Games</Text></ComboLabel>
                  <Combo w={256} text="Tetris" />
                </ComboRow>
                <ComboRow>
                  <ComboLabel $disabled><Globe off /><Text $ls={0.5}>Internet</Text></ComboLabel>
                  <Combo w={244} text="Firefox" disabled />
                </ComboRow>
                <ComboRow>
                  <ComboLabel><Text>Multimedia</Text></ComboLabel>
                  <Combo w={248} text="Pictures" />
                </ComboRow>
              </ComboColumn>
            </GroupBody>
            <GroupCaption text="Applications" gap={14} ls={0.55} />
          </Group>

          <Group $w={162}>
            <BigButton $w={161} $pl={11} $pt={30} $gap={11} $mr={5}>
              <ParagraphIcon />
              <Text>Paragraph</Text>
              <ArrowBelow><Chevron /></ArrowBelow>
            </BigButton>
          </Group>
          <Group $w={168}>
            <BigButton $w={167} $pl={10} $pt={30} $gap={11} $mr={2}>
              <ParagraphIcon />
              <Text>Show/Hide</Text>
              <ArrowBelow><Chevron /></ArrowBelow>
            </BigButton>
          </Group>
        </Ribbon>

        <Content>
          <Page>
            <RulerTop>
              {Array.from({ length: 79 }, (_, i) => (
                <CellX key={i}>{i % 10 === 0 ? <Text>{i / 10}</Text> : <TickX $long={i % 5 === 0} />}</CellX>
              ))}
            </RulerTop>
            <PageBody>
              <RulerLeft>
                {Array.from({ length: 24 }, (_, i) => (
                  <CellY key={i}>{i % 10 === 0 ? <Text>{i / 10}</Text> : <TickY $long={i % 5 === 0} />}</CellY>
                ))}
              </RulerLeft>
              <Paragraph>
                {paragraphLines.map(({ ls, text }) => <Text key={text} $ls={ls}>{text}</Text>)}
              </Paragraph>
            </PageBody>
          </Page>
          <Form>
            <CheckRow h={52} label="Group 1" text="visible" ls={1.15} />
            <CheckRow h={52} label="Group 2" text="visible" ls={0.95} />
            <FormRow $h={58}>
              <FormLabel><Text>Skin</Text></FormLabel>
              <Combo w={350} text="Dust Coffee" ls={0.8} />
            </FormRow>
            <CheckRow h={48} label="App menu" text="visible" on ls={0.55} />
            <CheckRow h={56} label="Taskbar" text="full" on ls={0.45} />
            <FormRow $h={54}>
              <FormLabel><Text $ls={0.2}>Change 'Paragraph'</Text></FormLabel>
              <PushButton><Text>change</Text></PushButton>
            </FormRow>
            <FormRow $h={58}>
              <FormLabel><Text $ls={0}>Locale</Text></FormLabel>
              <Combo w={350} text="English" ls={0.65} />
            </FormRow>
          </Form>
        </Content>

        <StatusBar>
          <Slot $mt={4}><Text $ls={0.59}>Right click to show menu</Text></Slot>
          <ToggleGroup>
            <Toggle $on><AlignIcon kind="left" /></Toggle>
            <Toggle><AlignIcon kind="center" /></Toggle>
            <Toggle><AlignIcon kind="right" /></Toggle>
            <Toggle><AlignIcon kind="justify" /></Toggle>
          </ToggleGroup>
        </StatusBar>
      </Window>
      <Defs />
    </Desktop>
  );
}
